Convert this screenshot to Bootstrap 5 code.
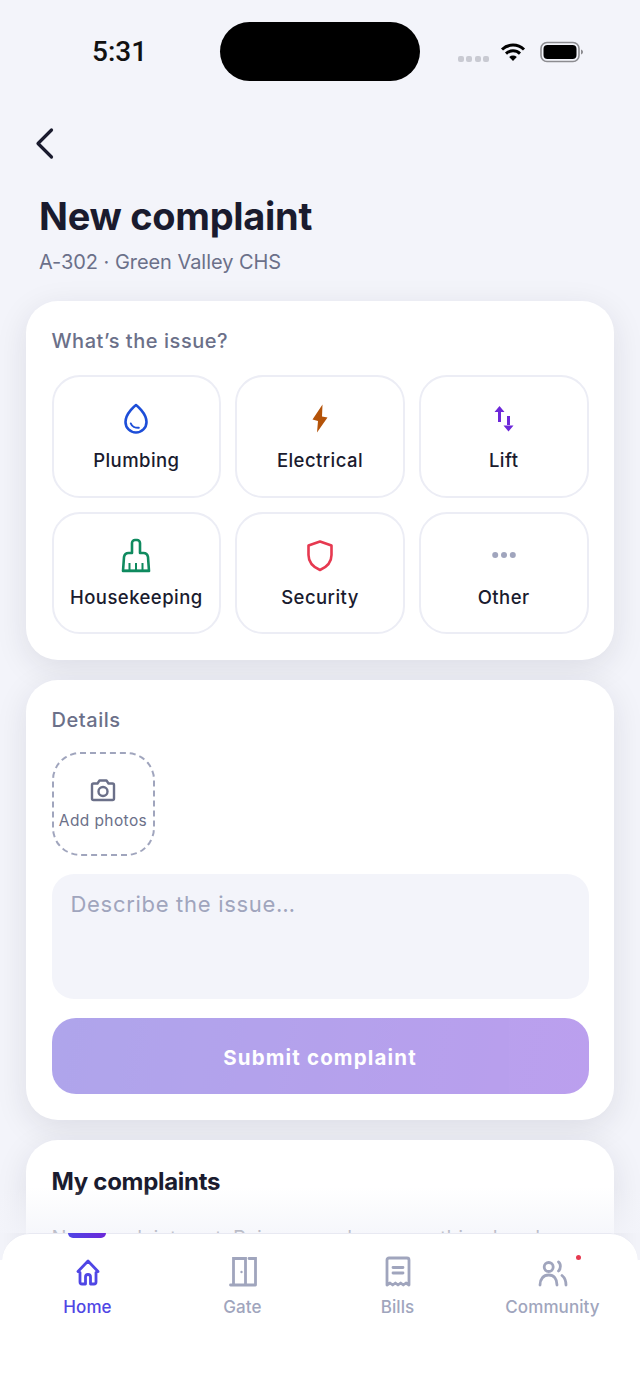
<!DOCTYPE html>
<html lang="en">
<head>
    <meta charset="UTF-8">
    <meta name="viewport" content="width=device-width, initial-scale=1.0">
    <title>New complaint</title>
    <link href="https://cdn.jsdelivr.net/npm/bootstrap@5.3.3/dist/css/bootstrap.min.css" rel="stylesheet">
    <style>
        body { background: #f3f4fa; font-family: Inter, "Noto Sans", sans-serif; color: #1a1b2e; }
        .app-screen { height: 1391px; overflow: hidden; position: relative; }
        .status-row { padding: 22px 56px 0 92px; height: 81px; }
        .status-time { font-size: 28px; font-weight: 500; color: #111; width: 54px; line-height: 60px; font-family: Roboto, sans-serif; }
        .island { width: 200px; height: 59px; background: #000; border-radius: 30px; margin-left: 74px; }
        .status-icons { margin-left: auto; padding-top: 19px; }
        .signal-dots { display: flex; gap: 2.3px; margin: 15px 11px 0 0; }
        .signal-dot { width: 6px; height: 6px; border-radius: 2px; background: #c9cad2; }
        .battery-icon { margin-left: 14px; }
        .back-btn { margin: 44px 0 0 26px; width: 36px; height: 36px; display: block; }
        .page-title { font-size: 38px; font-weight: 700; line-height: 46px; margin: 32px 0 9px 39px; letter-spacing: -.3px; }
        .page-sub { font-size: 20px; line-height: 28px; color: #6b7089; margin: 0 0 25px 39px; letter-spacing: -.05px; }
        .sheet { border-radius: 32px; background: #fff; padding: 26px 25.5px; margin: 0 26px 20px; box-shadow: 0 8px 32px rgba(26, 27, 46, .1); }
        .sheet-label { font-size: 20px; font-weight: 500; line-height: 28px; color: #6b7089; letter-spacing: .55px; }
        .issue-grid { display: grid; grid-template-columns: repeat(3, 1fr); gap: 14px; margin-top: 20px; }
        .issue-tile { height: 122.5px; border: 2px solid #ecedf5; border-radius: 28px; padding-top: 24px; text-align: center; }
        .issue-tile svg { display: block; margin: 0 auto; }
        .issue-tile span { display: block; font-size: 18.5px; font-weight: 500; line-height: 26px; margin-top: 10px; letter-spacing: .45px; }
        .photo-box { width: 103px; height: 104px; border: 2.5px dashed #a0a5bd; border-radius: 28px; margin-top: 18px; padding-top: 1px; color: #6b7089; }
        .photo-box span { font-size: 15.5px; line-height: 20px; margin-top: 9px; letter-spacing: .4px; white-space: nowrap; }
        .issue-text.form-control { height: 125px; margin-top: 18px; background: #f3f4fa; border: 0; border-radius: 22px; padding: 16px 19px; font-size: 22px; line-height: 28px; resize: none; letter-spacing: .7px; }
        .issue-text.form-control::placeholder { color: #a0a5bd; }
        .submit-btn.btn { height: 76px; margin-top: 19px; padding-top: 10px; border: 0; border-radius: 24px; background: linear-gradient(100deg, #614dd9, #773fdd); color: #fff; font-size: 20.5px; font-weight: 700; letter-spacing: 1.15px; opacity: .5; }
        .list-title { font-size: 24px; font-weight: 700; line-height: 32px; letter-spacing: -.3px; color: #1a1b2e; }
        .list-empty { font-size: 20px; line-height: 28px; color: #2f3248; margin-top: 26px; white-space: nowrap; }
        .tab-wrap { position: absolute; left: 0; right: 0; top: 1233px; bottom: 0; background: linear-gradient(transparent 27px, #fff 27px); }
        .tab-wrap::before { content: ""; position: absolute; left: 0; right: 0; bottom: 100%; height: 46px; background: linear-gradient(rgba(243, 244, 250, 0), rgba(243, 244, 250, .75)); }
        .tab-bar { height: 100%; margin: 0 2px; padding: 0 8px; background: #fff; border-radius: 28px 28px 0 0; border-top: 1px solid #e8e9f2; }
        .tab-item { width: 155px; height: 100%; padding-top: 20px; position: relative; text-align: center; color: #a0a5bd; font-size: 17px; font-weight: 500; line-height: 24px; letter-spacing: .1px; }
        .tab-item svg { display: block; margin: 0 auto 5px; }
        .tab-item.is-active { color: #4f46e5; }
        .tab-mark { position: absolute; top: -1px; left: 58px; width: 38px; height: 5px; border-radius: 0 0 6px 6px; background: linear-gradient(90deg, #4f46e5, #6d28d9); }
        .tab-dot { position: absolute; top: 21px; left: 101px; width: 5px; height: 5px; border-radius: 50%; background: #e63950; }
    </style>
</head>
<body>
<div class="app-screen">
    <div class="status-row d-flex">
        <div class="status-time">5:31</div>
        <div class="island"></div>
        <div class="status-icons d-flex align-items-start">
            <div class="signal-dots">
                <div class="signal-dot"></div><div class="signal-dot"></div><div class="signal-dot"></div><div class="signal-dot"></div>
            </div>
            <svg width="26" height="22" viewBox="0 0 26 22"><path d="M2 8.500a16 16 0 0 1 22 0M6 12.600a10.300 10.300 0 0 1 14 0" fill="none" stroke="#000" stroke-width="3"/><path d="M9.200 16a5.600 5.600 0 0 1 7.600 0L13 20z" fill="#000"/></svg>
            <svg class="battery-icon" width="44" height="22" viewBox="0 0 44 22"><rect x="1" y="1.500" width="38" height="19" rx="6" fill="none" stroke="#8c8c90" stroke-width="1.600"/><rect x="3.500" y="4" width="33" height="14" rx="4" fill="#000"/><path d="M41 8.500c1.400.4 2 1.300 2 2.500s-.6 2.100-2 2.500z" fill="#8c8c90"/></svg>
        </div>
    </div>

    <svg class="back-btn" viewBox="0 0 36 36"><path d="M25.500 5 12 18.500 25.500 32" fill="none" stroke="#1a1b2e" stroke-width="3.200" stroke-linecap="round" stroke-linejoin="round"/></svg>
    <h1 class="page-title">New complaint</h1>
    <p class="page-sub">A-302 · Green Valley CHS</p>

    <div class="sheet">
        <div class="sheet-label">What’s the issue?</div>
        <div class="issue-grid">
            <div class="issue-tile">
                <svg width="36" height="36" viewBox="0 0 36 36" fill="none" stroke="#1d4ed8" stroke-width="2.600" stroke-linecap="round" stroke-linejoin="round"><path d="M18 4C18 4 7.500 12 7.500 21a10.500 10.500 0 0 0 21 0C28.500 12 18 4 18 4Z"/><path d="M12.800 22.500c1 2.800 4.500 4.500 8 4.300" stroke-width="2"/></svg>
                <span>Plumbing</span>
            </div>
            <div class="issue-tile">
                <svg width="36" height="36" viewBox="0 0 36 36"><path d="M20.500 3.500 10.500 18.500l5.500 1.500-1 11.500L25.500 16.500l-5.500-1z" fill="#b45309"/></svg>
                <span>Electrical</span>
            </div>
            <div class="issue-tile">
                <svg width="36" height="36" viewBox="0 0 36 36" fill="#6d28d9"><path d="M12 11h3v10h-3zM8.500 11l5-6 5 6zM21 15h3v10h-3zM17.500 24.500l5 6 5-6z"/></svg>
                <span>Lift</span>
            </div>
            <div class="issue-tile">
                <svg width="36" height="36" viewBox="0 0 36 36" fill="none" stroke="#0f8a5f" stroke-width="2.600" stroke-linejoin="round"><path d="M14 15V5a3 3 0 0 1 3-3h2a3 3 0 0 1 3 3v10h3.500c2.500 0 4 1.500 4.500 4L31 33H5L6 19c.5-2.500 2-4 4.500-4Z"/><path d="M11.500 25v7M18 25v7M24.500 25v7M5 32.500h26" stroke-width="2"/></svg>
                <span>Housekeeping</span>
            </div>
            <div class="issue-tile">
                <svg width="36" height="36" viewBox="0 0 36 36"><path d="M18 3.500 29.500 7.500V17c0 7-4.500 12-11.500 15C11 29 6.500 24 6.500 17V7.500Z" fill="none" stroke="#e63950" stroke-width="2.600" stroke-linejoin="round"/></svg>
                <span>Security</span>
            </div>
            <div class="issue-tile">
                <svg width="36" height="36" viewBox="0 0 36 36" fill="#a0a5bd"><circle cx="9.200" cy="17" r="3"/><circle cx="18" cy="17" r="3"/><circle cx="26.800" cy="17" r="3"/></svg>
                <span>Other</span>
            </div>
        </div>
    </div>

    <div class="sheet">
        <div class="sheet-label">Details</div>
        <div class="photo-box d-flex flex-column align-items-center justify-content-center">
            <svg width="26" height="24" viewBox="0 0 26 24" fill="none" stroke="#6b7089" stroke-width="2.400" stroke-linejoin="round"><path d="M3.500 5.500h4L9.500 2.500h7l2 3h4a1.500 1.500 0 0 1 1.500 1.500v13.500a1.500 1.500 0 0 1-1.500 1.500h-19A1.500 1.500 0 0 1 2 20.500V7a1.500 1.500 0 0 1 1.500-1.500Z"/><circle cx="13" cy="13.500" r="4.500"/></svg>
            <span>Add photos</span>
        </div>
        <textarea class="issue-text form-control" placeholder="Describe the issue…"></textarea>
        <button type="button" class="submit-btn btn w-100">Submit complaint</button>
    </div>

    <div class="sheet">
        <div class="list-title">My complaints</div>
        <div class="list-empty">No complaints yet. Raise one when something breaks.</div>
    </div>

    <div class="tab-wrap">
        <div class="tab-bar d-flex">
            <div class="tab-item is-active">
                <div class="tab-mark"></div>
                <svg width="36" height="36" viewBox="0 0 36 36" fill="none" stroke="#4f46e5" stroke-width="2.800" stroke-linecap="round" stroke-linejoin="round"><path d="M18 7 8 17.500l2 1V28a2 2 0 0 0 2 2h3.500V23a2.500 2.500 0 0 1 5 0v7H24a2 2 0 0 0 2-2v-9.500l2-1Z"/></svg>
                Home
            </div>
            <div class="tab-item">
                <svg width="36" height="36" viewBox="0 0 36 36" fill="none" stroke="#a0a5bd" stroke-width="2.800" stroke-linecap="round"><path d="M8.500 31V4.500h12V31M24 4.500h6.500V31M5.500 31h25"/><circle cx="16.500" cy="18" r="1.200" fill="#a0a5bd" stroke="none"/></svg>
                Gate
            </div>
            <div class="tab-item">
                <svg width="36" height="36" viewBox="0 0 36 36" fill="none" stroke="#a0a5bd" stroke-width="2.800" stroke-linecap="round" stroke-linejoin="round"><path d="M7 31V6a2 2 0 0 1 2-2h18a2 2 0 0 1 2 2v25l-3-2-2.700 2-2.600-2-2.700 2-2.600-2-2.700 2-2.700-2Z"/><path d="M13 13.500h10M13 19h10"/></svg>
                Bills
            </div>
            <div class="tab-item">
                <div class="tab-dot"></div>
                <svg width="36" height="36" viewBox="0 0 36 36" fill="none" stroke="#a0a5bd" stroke-width="2.800" stroke-linecap="round"><circle cx="13.700" cy="13" r="4.500"/><path d="M5 31c0-6 3.500-10 8.700-10s8.300 4 8.300 10M23.500 8c2.500 1.500 2.500 7 0 9M27 21.500c2.500 2 4 5.500 4 9.500"/></svg>
                Community
            </div>
        </div>
    </div>
</div>
<script src="https://cdn.jsdelivr.net/npm/bootstrap@5.3.3/dist/js/bootstrap.bundle.min.js"></script>
</body>
</html>
